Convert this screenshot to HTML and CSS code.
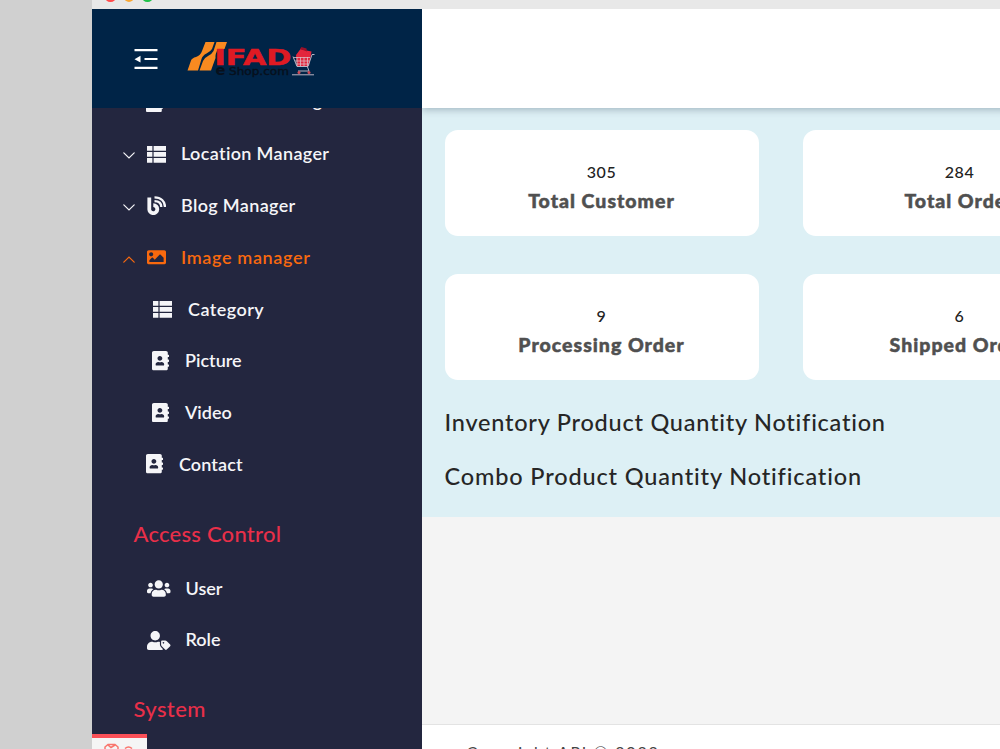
FILE: index.html
```html
<!DOCTYPE html>
<html lang="en">
<head>
<meta charset="utf-8">
<title>IFAD eShop Admin</title>
<link rel="stylesheet" href="styles.css">
</head>
<body>
<svg class="defs" width="0" height="0">
  <symbol id="list" viewBox="0 0 19 17"><path d="M0 0h5.4v4.8H0zM6.6 0H19v4.8H6.6zM0 6h5.4v4.8H0zM6.6 6H19v4.8H6.6zM0 12h5.4v4.8H0zM6.6 12H19v4.8H6.6z"/></symbol>
  <symbol id="book" viewBox="0 0 448 512"><path d="M436 160c6.6 0 12-5.4 12-12v-40c0-6.600-5.400-12-12-12h-20V48c0-26.500-21.500-48-48-48H48C21.500 0 0 21.500 0 48v416c0 26.500 21.500 48 48 48h320c26.500 0 48-21.500 48-48v-48h20c6.600 0 12-5.400 12-12v-40c0-6.600-5.400-12-12-12h-20v-64h20c6.600 0 12-5.400 12-12v-40c0-6.600-5.400-12-12-12h-20v-64h20zm-228-32c35.300 0 64 28.700 64 64s-28.700 64-64 64-64-28.700-64-64 28.700-64 64-64zm112 236.800c0 10.600-10 19.200-22.400 19.200H118.400C106 384 96 375.400 96 364.800v-19.200c0-31.800 30.100-57.600 67.200-57.600h5c12.300 5.100 25.700 8 39.800 8s27.600-2.900 39.800-8h5c37.100 0 67.200 25.800 67.200 57.600v19.200z"/></symbol>
  <symbol id="image" viewBox="0 64 512 384"><path d="M464 448H48c-26.510 0-48-21.490-48-48V112c0-26.510 21.490-48 48-48h416c26.510 0 48 21.490 48 48v288c0 26.510-21.490 48-48 48zM112 120c-30.928 0-56 25.072-56 56s25.072 56 56 56 56-25.072 56-56-25.072-56-56-56zM64 384h384V272l-87.515-87.515c-4.686-4.686-12.284-4.686-16.971 0L208 320l-55.515-55.515c-4.686-4.686-12.284-4.686-16.971 0L64 336v48z"/></symbol>
  <symbol id="chev" viewBox="0 0 12 7"><path d="M.8.8 6 6 11.200.8" fill="none" stroke="currentColor" stroke-width="1.200" stroke-linecap="round"/></symbol>
</svg>
<div class="window">
  <div class="titlebar"><i class="dot red"></i><i class="dot amber"></i><i class="dot green"></i></div>
  <aside class="sidebar">
    <div class="brand">
      <svg class="burger" width="24" height="21" viewBox="0 0 24 21" fill="#fff"><path d="M.5 0H23.500v2.200H.5zM.5 17.800H23.500V20H.5zM10.500 9H23.500v2.100H10.500zM.5 10.200 6.500 6.800v6.800z"/></svg>
      <svg class="logo" width="130" height="38" viewBox="0 0 130 38">
        <path fill="#f98a20" d="M19.500 1H28.500L26 8Q24.500 10.500 20.500 12.500T15.500 18L12 29.500H1.500L5 19.500Q6 17 10 16Q14.500 14.500 16 10zM30.500 1H41L38.500 8H32Q29 13 29.500 17L25 29.500H13.500L17 20Q18 17 22 15T27.500 10z"/>
        <text x="28.500" y="24" class="logo-name" textLength="77" lengthAdjust="spacingAndGlyphs">IFAD</text>
        <text x="29.500" y="34" class="logo-e" textLength="10" lengthAdjust="spacingAndGlyphs">e</text>
        <text x="43" y="33.800" class="logo-shop" textLength="60" lengthAdjust="spacingAndGlyphs">Shop.com</text>
        <path fill="#e3253c" d="M110 14 114.500 8l6 1.500 5 1L123 25H111z"/>
        <path fill="#9b1028" d="m114 8 1.500-2 5 1.500.5 3z"/>
        <path fill="none" stroke="#ddb9c2" stroke-width=".8" d="M107.500 16.500H124M109 20H123.500M110 23H123M111 16v9M114.500 16v9M118 16v9M121.500 16v9"/>
        <path fill="none" stroke="#b9b3c2" stroke-width="1" d="M107 15.500 111 25.500H122L126 13.500H128.500M121.500 26 123 30H112M106 33.800H128"/>
        <circle cx="113" cy="31.500" r="1.500" fill="#d34a58"/><circle cx="123" cy="31.500" r="1.500" fill="#d34a58"/>
      </svg>
    </div>
    <nav class="menu">
      <div class="row top first"><svg class="ic book"><use href="#book"/></svg><span class="t w-customer">Customer Manager</span></div>
      <div class="row"><svg class="chev"><use href="#chev"/></svg><svg class="ic list"><use href="#list"/></svg><span class="t w-location">Location Manager</span></div>
      <div class="row"><svg class="chev"><use href="#chev"/></svg><svg class="ic blog" viewBox="0 0 19 19"><path d="M2.300 1.500V12.800A4 4 0 1 0 6.300 9.200" fill="none" stroke="currentColor" stroke-width="3.800"/><path d="M7.500 1.300C14 1.300 18 5.300 18 11M7.500 5.100C12 5.100 14.300 7.400 14.300 11" fill="none" stroke="currentColor" stroke-width="2.300"/></svg><span class="t w-location">Blog Manager</span></div>
      <div class="row active"><svg class="chev up"><use href="#chev"/></svg><svg class="ic image"><use href="#image"/></svg><span class="t w-image">Image manager</span></div>
      <div class="row sub"><svg class="ic list"><use href="#list"/></svg><span class="t low w-category">Category</span></div>
      <div class="row sub"><svg class="ic book"><use href="#book"/></svg><span class="t">Picture</span></div>
      <div class="row sub"><svg class="ic book"><use href="#book"/></svg><span class="t low">Video</span></div>
      <div class="row top"><svg class="ic book"><use href="#book"/></svg><span class="t low w-contact">Contact</span></div>
      <h3 class="section">Access Control</h3>
      <div class="row top"><svg class="ic users" viewBox="0 0 640 512"><path d="M96 224c35.300 0 64-28.700 64-64s-28.700-64-64-64-64 28.700-64 64 28.700 64 64 64zm448 0c35.300 0 64-28.700 64-64s-28.700-64-64-64-64 28.700-64 64 28.700 64 64 64zm32 32h-64c-17.600 0-33.500 7.100-45.100 18.600 40.300 22.100 68.900 62 75.100 109.400h66c17.700 0 32-14.300 32-32v-32c0-35.300-28.700-64-64-64zm-256 0c61.900 0 112-50.100 112-112S381.900 32 320 32 208 82.100 208 144s50.100 112 112 112zm76.800 32h-8.300c-20.800 10-43.900 16-68.500 16s-47.600-6-68.500-16h-8.300C179.600 288 128 339.600 128 403.200V432c0 26.500 21.500 48 48 48h288c26.500 0 48-21.500 48-48v-28.800c0-63.600-51.600-115.200-115.200-115.200zm-223.700-13.400C161.500 263.100 145.600 256 128 256H64c-35.300 0-64 28.700-64 64v32c0 17.700 14.300 32 32 32h65.900c6.300-47.400 34.900-87.300 75.200-109.400z"/></svg><span class="t low">User</span></div>
      <div class="row top"><svg class="ic users" viewBox="0 0 640 512"><path d="M630.600 364.900l-90.300-90.200c-12-12-28.300-18.700-45.300-18.700h-79.300c-17.700 0-32 14.300-32 32v79.200c0 17 6.700 33.200 18.700 45.200l90.300 90.200c12.500 12.500 32.800 12.500 45.300 0l92.500-92.500c12.600-12.500 12.600-32.700.1-45.200zm-182.800-21c-13.300 0-24-10.700-24-24s10.700-24 24-24 24 10.700 24 24c0 13.200-10.700 24-24 24zm-223.800-88c70.700 0 128-57.300 128-128C352 57.300 294.700 0 224 0S96 57.300 96 128c0 70.600 57.300 127.900 128 127.900zm127.800 111.200V294c-12.200-3.600-24.900-6.200-38.200-6.200h-16.700c-22.200 10.200-46.900 16-72.900 16s-50.600-5.800-72.900-16h-16.700C60.200 287.900 0 348.100 0 422.300v41.600c0 26.500 21.500 48 48 48h352c15.500 0 29.100-7.500 37.900-18.900l-58-58c-18.100-18.100-28.100-42.200-28.100-67.900z"/></svg><span class="t">Role</span></div>
      <h3 class="section last">System</h3>
    </nav>
    <div class="debug"><svg width="32" height="12" viewBox="0 0 32 12" fill="none" stroke="#f9766d" stroke-width="1.500"><path d="M1 12V5L4 2.500H11L14 5v7M4 3l3 2.500L11 3M21 6.500Q24.500 3.500 28 6.500"/></svg></div>
  </aside>
  <main class="main">
    <header class="header"></header>
    <section class="dash">
      <div class="cards">
        <div class="card"><span class="num">305</span><strong class="label">Total Customer</strong></div>
        <div class="card"><span class="num">284</span><strong class="label">Total Order</strong></div>
        <div class="card"><span class="num">9</span><strong class="label">Processing Order</strong></div>
        <div class="card"><span class="num">6</span><strong class="label">Shipped Order</strong></div>
      </div>
      <h2 class="notice w-inv">Inventory Product Quantity Notification</h2>
      <h2 class="notice w-combo">Combo Product Quantity Notification</h2>
    </section>
    <footer class="footer">Copyright API © 2022</footer>
  </main>
</div>
</body>
</html>
```
FILE: styles.css
```css
* { box-sizing: border-box; }
html, body { margin: 0; height: 749px; overflow: hidden; }
body { background: #d0d0d0; padding-left: 92px; font-family: Lato, "Liberation Sans", sans-serif; font-variant-ligatures: none; }
.defs { position: absolute; }
.window { width: 908px; height: 749px; display: grid; grid-template: 9px 740px / 330px 578px; overflow: hidden; }
.titlebar { grid-column: 1 / 3; background: #e8e8e8; display: flex; gap: 8px; padding-left: 13px; overflow: hidden; }
.dot { width: 10.500px; height: 10.500px; border-radius: 50%; margin-top: -9px; }
.red { background: #ff4b4b; }
.amber { background: #f9a733; }
.green { background: #20c24a; }
.sidebar { background: #23263f; color: #f5f5f8; position: relative; overflow: hidden; }
.brand { height: 99px; background: #002447; display: flex; padding: 32px 0 0 42px; align-items: flex-start; }
.burger { margin-top: 8px; }
.logo { margin-left: 28px; }
.logo-name { font: bold 21.500px "DejaVu Sans", sans-serif; fill: #df1a23; stroke: #df1a23; stroke-width: .5px; }
.logo-e { font: bold 14px "DejaVu Sans", sans-serif; fill: #07101c; }
.logo-shop { font: 11px "DejaVu Sans", sans-serif; fill: #07101c; stroke: #07101c; stroke-width: .4px; }
.menu { height: 641px; overflow: hidden; }
.row { height: 51.700px; display: flex; align-items: center; padding-left: 31px; }
.row.first { margin-top: -31.500px; }
.row.top { padding-left: 55px; }
.row.sub { padding-left: 61px; }
.row.active { color: #f9690e; }
.chev { width: 12px; height: 7px; margin: 3px 12px 0 0; }
.chev.up { transform: rotate(180deg); margin-top: 4px; }
.ic { fill: currentColor; flex: none; }
.ic.list { width: 19px; height: 17px; margin-right: 15px; }
.ic.book { width: 17px; height: 19.500px; margin: 0 16px 0 -1px; }
.ic.blog { width: 19px; height: 19px; margin-right: 15px; }
.ic.image { width: 19px; height: 14.500px; margin-right: 15px; }
.ic.users { width: 23.500px; height: 19px; margin: 0 15px 0 0; }
.t { font-size: 18px; font-weight: 600; white-space: nowrap; line-height: 24px; padding-bottom: 2px; }
.t.low { padding-bottom: 0; }
.w-customer { letter-spacing: .55px; padding-bottom: 4px; }
.w-location { letter-spacing: .35px; }
.w-image { letter-spacing: .65px; padding-bottom: 0; }
.w-category { letter-spacing: .45px; margin-left: 1px; }
.w-contact { letter-spacing: .1px; }
.section { margin: 0; height: 72.500px; padding: 30px 0 0 41.500px; font-size: 22px; line-height: 28px; font-weight: 500; letter-spacing: .25px; color: #e92f49; }
.section.last { padding-top: 29px; letter-spacing: .4px; }
.debug { position: absolute; left: 0; bottom: 0; width: 55px; height: 15px; background: #f5f5f5; border-top: 4px solid #fb5058; padding: 4px 0 0 12px; line-height: 0; overflow: hidden; }
.main { display: grid; grid-template: 99px 409px 207px 25px / 578px; background: #f4f4f4; overflow: hidden; }
.header { background: #fff; width: 598px; box-shadow: 0 2px 7px rgba(60, 80, 100, .35); clip-path: inset(0 0 -12px 0); z-index: 1; }
.dash { background: #ddf0f5; padding: 22px 0 0 22.500px; overflow: hidden; }
.cards { display: grid; grid-template-columns: 314px 314px; gap: 38.500px 44px; }
.card { height: 105.500px; background: #fff; border-radius: 13px; display: flex; flex-direction: column; align-items: center; padding-top: 31px; white-space: nowrap; }
.num { font-size: 16px; line-height: 22px; font-weight: 500; letter-spacing: .5px; color: #222; }
.label { font-size: 19.500px; line-height: 24px; font-weight: 900; letter-spacing: 1px; margin-top: 6px; color: #505050; -webkit-text-stroke: .5px #505050; }
.notice { margin: 0; font-size: 23.500px; line-height: 30px; font-weight: 500; letter-spacing: .76px; color: #262626; white-space: nowrap; }
.w-inv { margin-top: 27px; }
.w-combo { margin-top: 24px; letter-spacing: .85px; }
.footer { grid-row: 4; background: #fff; border-top: 1px solid #e3e3e3; padding: 16px 0 0 44.500px; font-size: 16px; line-height: 22px; letter-spacing: 1.850px; color: #444; overflow: hidden; white-space: nowrap; }
```
